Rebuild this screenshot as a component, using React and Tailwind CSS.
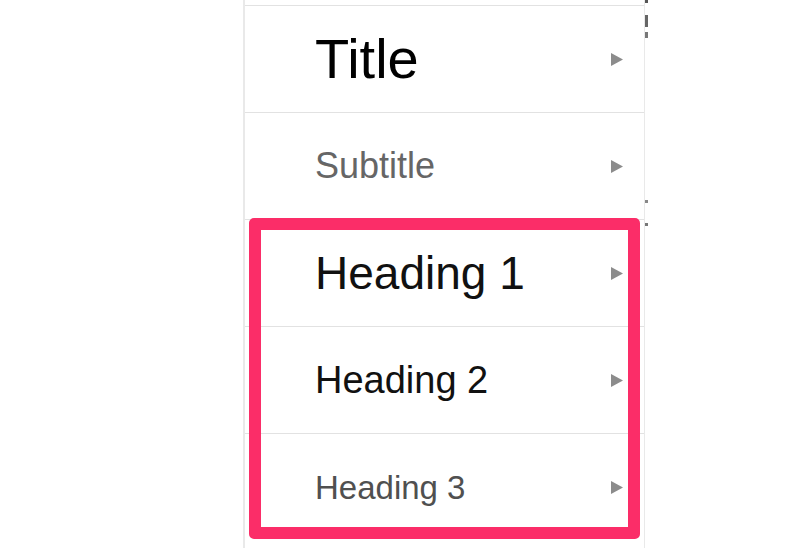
import React from "react";

function Arrow() {
  return (
    <svg width="13" height="13" viewBox="0 0 13 13" className="shrink-0">
      <polygon points="0,0 12,6.5 0,13" fill="#8c8c8c" />
    </svg>
  );
}

function Row({ children, className, last }) {
  return (
    <div
      className={
        "flex h-[107px] items-center justify-between pl-[70px] pr-[20px] " +
        (last ? "" : "border-b border-[#e2e2e2]")
      }
    >
      <span className={"leading-none whitespace-nowrap " + className}>{children}</span>
      <Arrow />
    </div>
  );
}

export default function App() {
  return (
    <div
      className="flex h-[548px] w-[800px] overflow-hidden bg-white"
      style={{ fontFamily: '"Liberation Sans", Arial, sans-serif' }}
    >
      <div className="ml-[243px] flex w-[402px] flex-col border-l-2 border-r border-[#e9e9e9] bg-white">
        <div className="h-[6px] shrink-0 border-b border-[#e2e2e2]" />
        <Row className="text-[56px] text-black">Title</Row>
        <Row className="text-[36px] text-[#666666]">Subtitle</Row>
        <div className="relative">
          <Row className="text-[46px] text-[#111111]">Heading 1</Row>
          <Row className="text-[38px] text-[#111111]">Heading 2</Row>
          <Row className="text-[33px] text-[#505050]" last>
            Heading 3
          </Row>
          <div className="pointer-events-none absolute left-[4px] top-[-2px] h-[321px] w-[391px] rounded-[5px] border-[12px] border-[#fb2d68]" />
        </div>
      </div>
      <div className="flex w-[3px] flex-col">
        <div className="h-[3px] bg-[#555]" />
        <div className="h-[12px]" />
        <div className="h-[12px] bg-[#666]" />
        <div className="h-[5px]" />
        <div className="h-[6px] bg-[#777]" />
        <div className="h-[162px]" />
        <div className="h-[3px] bg-[#888]" />
        <div className="h-[20px]" />
        <div className="h-[3px] bg-[#777]" />
      </div>
    </div>
  );
}
